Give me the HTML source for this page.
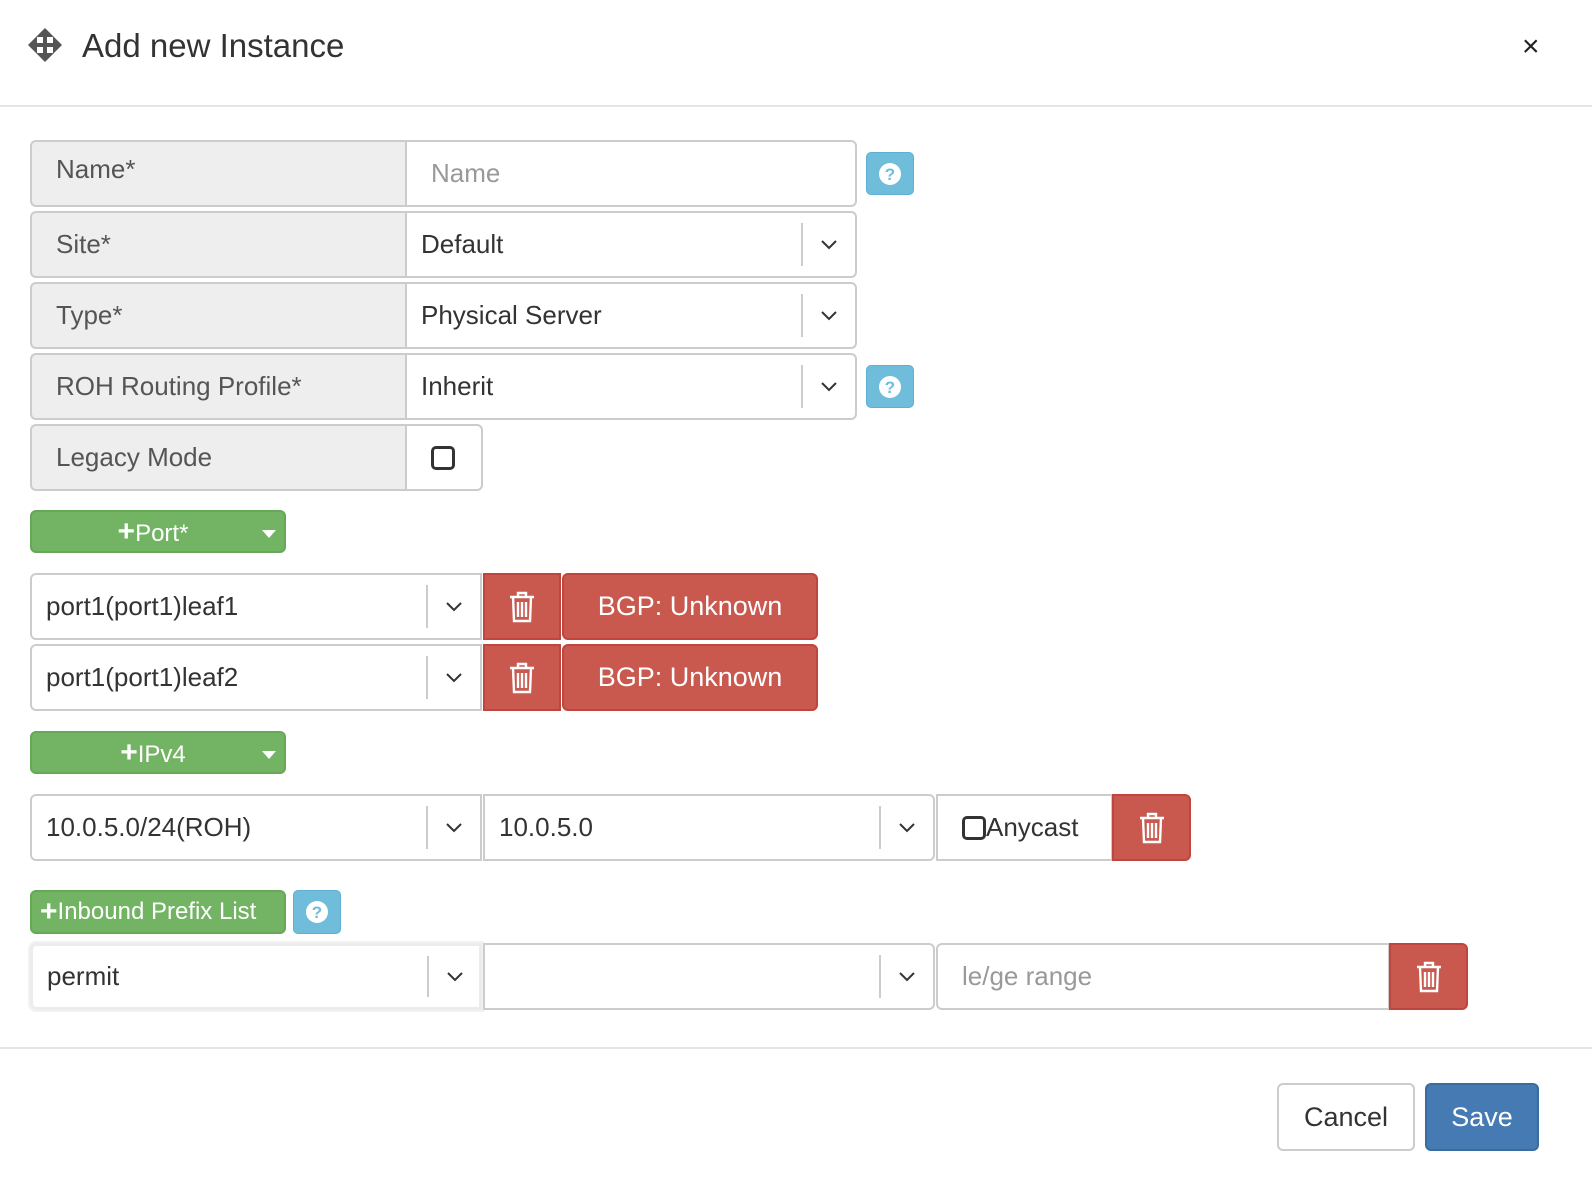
<!DOCTYPE html>
<html><head><meta charset="utf-8"><style>
*{box-sizing:border-box;margin:0;padding:0}
body{width:1592px;height:1196px;background:#fff;font-family:"Liberation Sans",Arial,sans-serif;position:relative;overflow:hidden;color:#333}
.a{position:absolute}
.lbl{position:absolute;background:#eee;border:2px solid #ccc;border-right:none;border-radius:6px 0 0 6px;font-size:26px;color:#555;padding-left:24px}
.inp{position:absolute;background:#fff;border:2px solid #ccc;font-size:26px;color:#333;padding-left:14px;display:flex;align-items:center}
.sep{position:absolute;top:10px;bottom:10px;width:2px;background:#ccc}
.chev{position:absolute;top:50%;margin-top:-5px}
.btn-r{position:absolute;background:#c9584f;border:2px solid #c0453c;border-radius:6px;color:#fff;font-size:27px;display:flex;align-items:center;justify-content:center}
.btn-g{position:absolute;background:#72b463;border:2px solid #65a957;border-radius:6px;color:#fff;font-size:24px;display:flex;align-items:center;justify-content:center}
.help{position:absolute;background:#6fbcdb;border:1px solid #5fb0d2;border-radius:5px;display:flex;align-items:center;justify-content:center}
</style></head><body>
<svg class="a" style="left:28px;top:28px" width="34" height="34" viewBox="0 0 34 34">
<polygon points="17,0 34,17 17,34 0,17" fill="#555"/>
<rect x="9" y="9" width="6" height="6" fill="#fff"/><rect x="19" y="9" width="6" height="6" fill="#fff"/>
<rect x="9" y="19" width="6" height="6" fill="#fff"/><rect x="19" y="19" width="6" height="6" fill="#fff"/>
</svg>
<div class="a" style="left:82px;top:27px;font-size:33px;color:#333">Add new Instance</div>
<div class="a" style="left:1522px;top:30px;font-size:30px;color:#222">×</div>
<div class="a" style="left:0;top:105px;width:1592px;height:2px;background:#e5e5e5"></div>

<!-- rows -->
<div class="lbl" style="left:30px;top:140px;width:375px;height:67px;padding-top:12px">Name*</div>
<div class="inp" style="left:405px;top:140px;width:452px;height:67px;border-radius:0 6px 6px 0;padding-left:24px;color:#999">Name</div>
<div class="help" style="left:866px;top:152px;width:48px;height:43px"><svg width="24" height="24" viewBox="0 0 24 24"><circle cx="12" cy="12" r="11" fill="#fff"/><text x="12" y="18" text-anchor="middle" font-family="Liberation Sans" font-weight="bold" font-size="17" fill="#6fbcdb">?</text></svg></div>

<div class="lbl" style="left:30px;top:211px;width:375px;height:67px;line-height:63px">Site*</div>
<div class="inp" style="left:405px;top:211px;width:452px;height:67px;border-radius:0 6px 6px 0">Default<div class="sep" style="left:394px"></div><svg class="chev" style="left:414px" width="16" height="10"><path d="M1 1 L8 8 L15 1" stroke="#333" stroke-width="2" fill="none"/></svg></div>

<div class="lbl" style="left:30px;top:282px;width:375px;height:67px;line-height:63px">Type*</div>
<div class="inp" style="left:405px;top:282px;width:452px;height:67px;border-radius:0 6px 6px 0">Physical Server<div class="sep" style="left:394px"></div><svg class="chev" style="left:414px" width="16" height="10"><path d="M1 1 L8 8 L15 1" stroke="#333" stroke-width="2" fill="none"/></svg></div>

<div class="lbl" style="left:30px;top:353px;width:375px;height:67px;line-height:63px">ROH Routing Profile*</div>
<div class="inp" style="left:405px;top:353px;width:452px;height:67px;border-radius:0 6px 6px 0">Inherit<div class="sep" style="left:394px"></div><svg class="chev" style="left:414px" width="16" height="10"><path d="M1 1 L8 8 L15 1" stroke="#333" stroke-width="2" fill="none"/></svg></div>
<div class="help" style="left:866px;top:365px;width:48px;height:43px"><svg width="24" height="24" viewBox="0 0 24 24"><circle cx="12" cy="12" r="11" fill="#fff"/><text x="12" y="18" text-anchor="middle" font-family="Liberation Sans" font-weight="bold" font-size="17" fill="#6fbcdb">?</text></svg></div>

<div class="lbl" style="left:30px;top:424px;width:375px;height:67px;line-height:63px">Legacy Mode</div>
<div class="inp" style="left:405px;top:424px;width:78px;height:67px;border-radius:0 6px 6px 0"><div style="width:24px;height:24px;border:3.5px solid #333;border-radius:5px;margin-left:10px"></div></div>

<!-- port -->
<div class="btn-g" style="left:30px;top:510px;width:256px;height:43px"><span style="margin-left:-10px"><b style="font-size:30px">+</b>Port*</span><svg class="a" style="left:230px;top:18px" width="14" height="8"><polygon points="0,0 14,0 7,8" fill="#fff"/></svg></div>

<div class="inp" style="left:30px;top:573px;width:452px;height:67px;border-radius:6px 0 0 6px">port1(port1)leaf1<div class="sep" style="left:394px"></div><svg class="chev" style="left:414px" width="16" height="10"><path d="M1 1 L8 8 L15 1" stroke="#333" stroke-width="2" fill="none"/></svg></div>
<div class="btn-r" style="left:483px;top:573px;width:78px;height:67px;border-radius:0"><svg width="26" height="32" viewBox="0 0 26 32"><g fill="none" stroke="#fff" stroke-width="2.4"><path d="M1 6 H25 M9 6 V2 H17 V6 M4 6 L5 30 H21 L22 6 M9 11 V26 M13 11 V26 M17 11 V26"/></g></svg></div>
<div class="btn-r" style="left:562px;top:573px;width:256px;height:67px">BGP: Unknown</div>

<div class="inp" style="left:30px;top:644px;width:452px;height:67px;border-radius:6px 0 0 6px">port1(port1)leaf2<div class="sep" style="left:394px"></div><svg class="chev" style="left:414px" width="16" height="10"><path d="M1 1 L8 8 L15 1" stroke="#333" stroke-width="2" fill="none"/></svg></div>
<div class="btn-r" style="left:483px;top:644px;width:78px;height:67px;border-radius:0"><svg width="26" height="32" viewBox="0 0 26 32"><g fill="none" stroke="#fff" stroke-width="2.4"><path d="M1 6 H25 M9 6 V2 H17 V6 M4 6 L5 30 H21 L22 6 M9 11 V26 M13 11 V26 M17 11 V26"/></g></svg></div>
<div class="btn-r" style="left:562px;top:644px;width:256px;height:67px">BGP: Unknown</div>

<!-- ipv4 -->
<div class="btn-g" style="left:30px;top:731px;width:256px;height:43px"><span style="margin-left:-10px"><b style="font-size:30px">+</b>IPv4</span><svg class="a" style="left:230px;top:18px" width="14" height="8"><polygon points="0,0 14,0 7,8" fill="#fff"/></svg></div>

<div class="inp" style="left:30px;top:794px;width:452px;height:67px;border-radius:6px 0 0 6px">10.0.5.0/24(ROH)<div class="sep" style="left:394px"></div><svg class="chev" style="left:414px" width="16" height="10"><path d="M1 1 L8 8 L15 1" stroke="#333" stroke-width="2" fill="none"/></svg></div>
<div class="inp" style="left:483px;top:794px;width:452px;height:67px;border-radius:0 6px 6px 0">10.0.5.0<div class="sep" style="left:394px"></div><svg class="chev" style="left:414px" width="16" height="10"><path d="M1 1 L8 8 L15 1" stroke="#333" stroke-width="2" fill="none"/></svg></div>
<div class="inp" style="left:936px;top:794px;width:177px;height:67px;padding-left:24px"><div style="width:24px;height:24px;border:3.5px solid #333;border-radius:5px"></div>Anycast</div>
<div class="btn-r" style="left:1112px;top:794px;width:79px;height:67px;border-radius:0 6px 6px 0"><svg width="26" height="32" viewBox="0 0 26 32"><g fill="none" stroke="#fff" stroke-width="2.4"><path d="M1 6 H25 M9 6 V2 H17 V6 M4 6 L5 30 H21 L22 6 M9 11 V26 M13 11 V26 M17 11 V26"/></g></svg></div>

<!-- inbound -->
<div class="btn-g" style="left:30px;top:890px;width:256px;height:44px;justify-content:flex-start;padding-left:8px"><b style="font-size:30px">+</b>Inbound Prefix List</div>
<div class="help" style="left:293px;top:890px;width:48px;height:44px"><svg width="24" height="24" viewBox="0 0 24 24"><circle cx="12" cy="12" r="11" fill="#fff"/><text x="12" y="18" text-anchor="middle" font-family="Liberation Sans" font-weight="bold" font-size="17" fill="#6fbcdb">?</text></svg></div>

<div class="inp" style="left:30px;top:943px;width:452px;height:67px;border-radius:6px 0 0 6px;border:3px solid #ececec;box-shadow:0 0 0 2px #f2f2f2">permit<div class="sep" style="left:394px"></div><svg class="chev" style="left:414px" width="16" height="10"><path d="M1 1 L8 8 L15 1" stroke="#333" stroke-width="2" fill="none"/></svg></div>
<div class="inp" style="left:483px;top:943px;width:452px;height:67px;border-radius:0 6px 6px 0"><div class="sep" style="left:394px"></div><svg class="chev" style="left:414px" width="16" height="10"><path d="M1 1 L8 8 L15 1" stroke="#333" stroke-width="2" fill="none"/></svg></div>
<div class="inp" style="left:936px;top:943px;width:454px;height:67px;border-radius:6px 0 0 6px;padding-left:24px;color:#999">le/ge range</div>
<div class="btn-r" style="left:1389px;top:943px;width:79px;height:67px;border-radius:0 6px 6px 0"><svg width="26" height="32" viewBox="0 0 26 32"><g fill="none" stroke="#fff" stroke-width="2.4"><path d="M1 6 H25 M9 6 V2 H17 V6 M4 6 L5 30 H21 L22 6 M9 11 V26 M13 11 V26 M17 11 V26"/></g></svg></div>

<div class="a" style="left:0;top:1047px;width:1592px;height:2px;background:#e5e5e5"></div>
<div class="a" style="left:1277px;top:1083px;width:138px;height:68px;border:2px solid #ccc;border-radius:6px;font-size:27px;display:flex;align-items:center;justify-content:center;color:#333">Cancel</div>
<div class="a" style="left:1425px;top:1083px;width:114px;height:68px;background:#457ab2;border:2px solid #3a6ca0;border-radius:6px;font-size:27px;display:flex;align-items:center;justify-content:center;color:#fff">Save</div>
</body></html>
